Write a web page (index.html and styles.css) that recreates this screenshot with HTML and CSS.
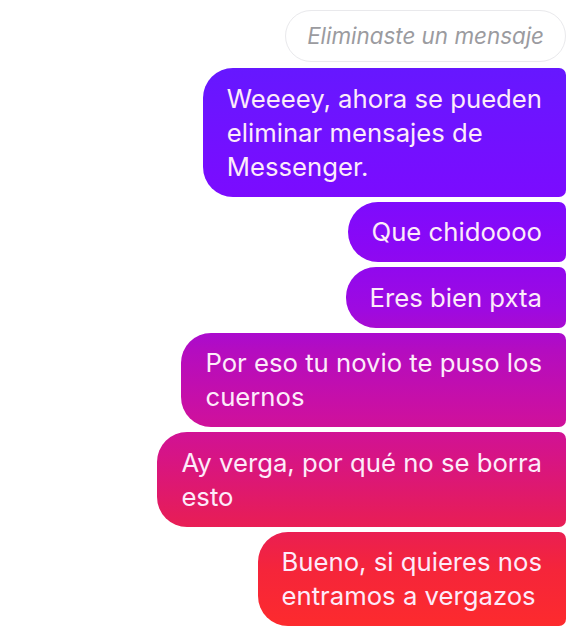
FILE: index.html
```html
<!DOCTYPE html>
<html lang="es">
<head>
<meta charset="utf-8">
<title>Messenger</title>
<link rel="stylesheet" href="styles.css">
</head>
<body>
<div class="chat">
  <div class="deleted">Eliminaste un mensaje</div>
  <div class="msg">Weeeey, ahora se pueden<br>eliminar mensajes de<br>Messenger.</div>
  <div class="msg">Que chidoooo</div>
  <div class="msg">Eres bien pxta</div>
  <div class="msg">Por eso tu novio te puso los<br>cuernos</div>
  <div class="msg">Ay verga, por qué no se borra<br>esto</div>
  <div class="msg">Bueno, si quieres nos<br>entramos a vergazos</div>
</div>
</body>
</html>
```

FILE: styles.css
```css
html, body {
  margin: 0;
  padding: 0;
  background: #ffffff;
}

.chat {
  display: flex;
  flex-direction: column;
  align-items: flex-end;
  gap: 5px;
  padding: 10px 4px 0 0;
  font-family: Inter, "Liberation Sans", sans-serif;
}

.deleted {
  box-sizing: border-box;
  height: 52px;
  padding: 0 21px 0 21px;
  border: 1px solid #e9e9ec;
  border-radius: 26px;
  font-style: italic;
  font-size: 22.4px;
  line-height: 50px;
  color: #9b9b9f;
  white-space: nowrap;
  margin-bottom: 1px;
}

.msg {
  padding: 13.5px 24px 13px 24px;
  border-radius: 30px 7px 7px 30px;
  font-size: 25.7px;
  line-height: 34px;
  color: #fdebfa;
  white-space: nowrap;
  background-image: linear-gradient(180deg,
    #5a1dff 0px,
    #6d14ff 110px,
    #7a0cff 190px,
    #8a08f5 245px,
    #9e0ae0 310px,
    #b40cc0 350px,
    #cc10a0 415px,
    #d61486 455px,
    #e51c5c 515px,
    #f5253a 570px,
    #ff2c2a 640px);
  background-attachment: fixed;
  background-size: 100% 640px;
}
```
